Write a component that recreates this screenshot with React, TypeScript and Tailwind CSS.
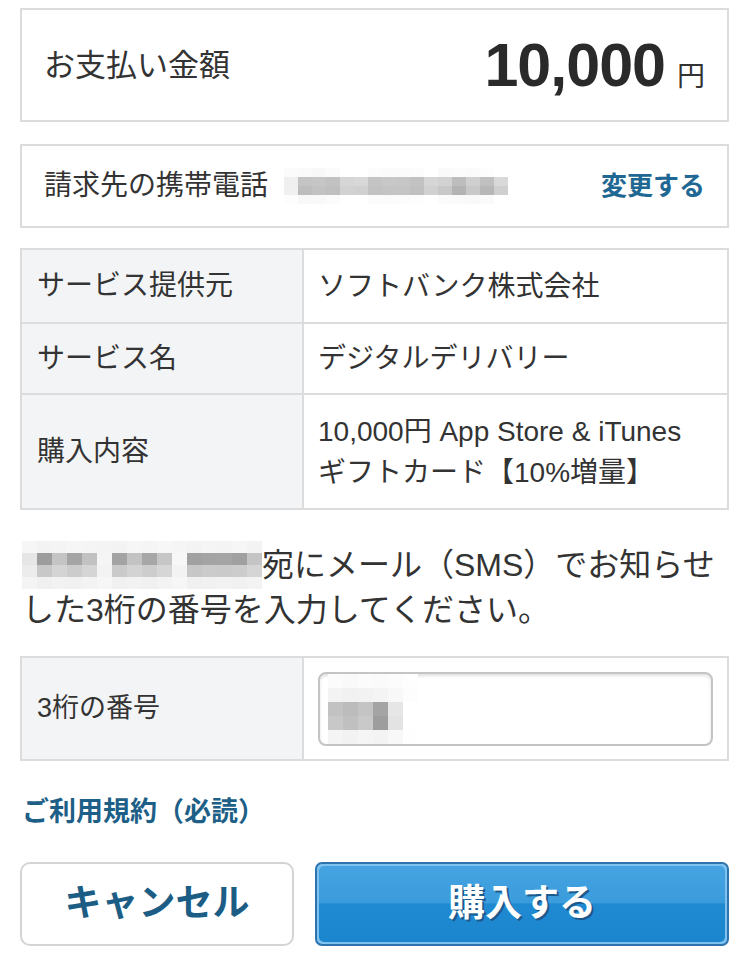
import React from "react";

const font = "font-['Liberation_Sans','Noto_Sans_CJK_JP',sans-serif]";

// pixelated placeholder for the masked phone numbers
const Mosaic: React.FC<{ cells: string[][]; w: number; h: number }> = ({
  cells,
  w,
  h,
}) => (
  <div className="flex flex-col">
    {cells.map((row, r) => (
      <div key={r} className="flex">
        {row.map((c, i) => (
          <div key={i} style={{ width: w, height: h, background: c }} />
        ))}
      </div>
    ))}
  </div>
);

const phoneCells = [
  ["#fbfbfb", "#fafafa", "#f8f8f8", "#fbfbfb", "#fff", "#fff", "#fcfcfc", "#fbfbfb", "#fbfbfb", "#fcfcfc", "#fff", "#fafafa", "#fcfcfc", "#fbfbfb", "#fdfdfd", "#fff"],
  ["#efefef", "#c4c4c4", "#c6c6c6", "#c2c2c2", "#d6d6d6", "#d8d8d8", "#c4c4c4", "#c8c8c8", "#c6c6c6", "#c2c2c2", "#d6d6d6", "#d2d2d2", "#bdbdbd", "#cfcfcf", "#c0c0c0", "#d9d9d9"],
  ["#f0f0f0", "#bdbdbd", "#c2c2c2", "#bfbfbf", "#d2d2d2", "#d0d0d0", "#c2c2c2", "#c4c4c4", "#c4c4c4", "#c0c0c0", "#d1d1d1", "#c8c8c8", "#b3b3b3", "#c8c8c8", "#b7b7b7", "#cfcfcf"],
  ["#fdfdfd", "#f8f8f8", "#f9f9f9", "#fbfbfb", "#fff", "#fff", "#fbfbfb", "#fbfbfb", "#fcfcfc", "#fdfdfd", "#fff", "#fbfbfb", "#fafafa", "#f9f9f9", "#fafafa", "#fff"],
];

const mailCells = [
  ["#f6f6f6", "#f3f3f3", "#f4f4f4", "#f6f6f6", "#f5f5f5", "#f4f4f4", "#f3f3f3", "#f6f6f6", "#f5f5f5", "#f7f7f7", "#f5f5f5", "#f3f3f3", "#f5f5f5", "#f4f4f4", "#f6f6f6", "#f3f3f3"],
  ["#e6e6e6", "#9d9d9d", "#c4c4c4", "#a5a5a5", "#c2c2c2", "#f5f5f5", "#a3a3a3", "#c3c3c3", "#a7a7a7", "#c6c6c6", "#f7f7f7", "#a1a1a1", "#a4a4a4", "#a5a5a5", "#a0a0a0", "#c4c4c4"],
  ["#ececec", "#c8c8c8", "#d4d4d4", "#cccccc", "#d5d5d5", "#f3f3f3", "#cacaca", "#d3d3d3", "#cdcdcd", "#d6d6d6", "#f3f3f3", "#c7c7c7", "#cbcbcb", "#cacaca", "#cccccc", "#d5d5d5"],
  ["#f4f4f4", "#f0f0f0", "#f2f2f2", "#f1f1f1", "#f3f3f3", "#f6f6f6", "#f1f1f1", "#f2f2f2", "#f0f0f0", "#f3f3f3", "#f6f6f6", "#f0f0f0", "#f1f1f1", "#f2f2f2", "#f1f1f1", "#f3f3f3"],
];

const codeCells = [
  ["#fbfbfb", "#f9f9f9", "#fbfbfb", "#fafafa", "#fcfcfc", "#fefefe"],
  ["#f3f3f3", "#f1f1f1", "#f2f2f2", "#f4f4f4", "#f8f8f8", "#fdfdfd"],
  ["#c2c2c2", "#bcbcbc", "#c4c4c4", "#a4a4a4", "#e6e6e6", "#ffffff"],
  ["#c8c8c8", "#c0c0c0", "#c9c9c9", "#9d9d9d", "#e3e3e3", "#ffffff"],
  ["#f4f4f4", "#f2f2f2", "#f5f5f5", "#f3f3f3", "#f8f8f8", "#fefefe"],
];

const rows: { label: string; value: React.ReactNode; h: string }[] = [
  { label: "サービス提供元", value: "ソフトバンク株式会社", h: "h-[72px]" },
  { label: "サービス名", value: "デジタルデリバリー", h: "h-[71px]" },
  {
    label: "購入内容",
    value: (
      <>
        10,000円 App Store &amp; iTunes
        <br />
        ギフトカード【10%増量】
      </>
    ),
    h: "h-[115px]",
  },
];

const App: React.FC = () => {
  return (
    <div className={`${font} w-[750px] h-[965px] bg-white text-[#333] pl-[20px] pr-[21px] pt-[8px]`}>
      {/* amount */}
      <div className="h-[114px] border-2 border-[#dcdcdc] flex items-center justify-between pl-[22px] pr-[22px]">
        <div className="text-[31px] leading-none">お支払い金額</div>
        <div className="flex items-baseline gap-[12px]">
          <span className="text-[61px] font-bold leading-none tracking-[-1px] text-[#2a2a2a]">
            10,000
          </span>
          <span className="text-[28px] leading-none">円</span>
        </div>
      </div>

      {/* billing phone */}
      <div className="mt-[22px] h-[84px] border-2 border-[#dcdcdc] flex items-center pl-[22px] pr-[22px]">
        <div className="text-[28px] leading-none">請求先の携帯電話</div>
        <div className="ml-[16px]">
          <Mosaic cells={phoneCells} w={14} h={9} />
        </div>
        <div className="ml-auto text-[26px] font-bold text-[#1f6894] leading-none">
          変更する
        </div>
      </div>

      {/* details table */}
      <div className="mt-[20px] border-2 border-[#dcdcdc] flex flex-col">
        {rows.map((r, i) => (
          <div
            key={i}
            className={`${r.h} flex ${i > 0 ? "border-t-2 border-[#dcdcdc]" : ""}`}
          >
            <div className="w-[282px] bg-[#f3f4f6] border-r-2 border-[#dcdcdc] flex items-center pl-[15px] text-[28px]">
              {r.label}
            </div>
            <div className="flex-1 flex items-center pl-[14px] text-[28px] leading-[41px]">
              {r.value}
            </div>
          </div>
        ))}
      </div>

      {/* notice */}
      <div className="mt-[31px] text-[32px] leading-[43px] pl-[2px]">
        <div className="flex items-center">
          <Mosaic cells={mailCells} w={15} h={12} />
          <span>宛にメール（SMS）でお知らせ</span>
        </div>
        <div>した3桁の番号を入力してください。</div>
      </div>

      {/* code input */}
      <div className="mt-[24px] h-[105px] border-2 border-[#dcdcdc] flex">
        <div className="w-[282px] bg-[#f3f4f6] border-r-2 border-[#dcdcdc] flex items-center pl-[15px] text-[27px]">
          3桁の番号
        </div>
        <div className="flex-1 flex items-center pl-[14px] pr-[14px]">
          <div className="w-full h-[74px] rounded-[8px] border-2 border-[#c4c4c4] shadow-[inset_0_2px_3px_rgba(0,0,0,0.12)] bg-white flex items-center pl-[8px]">
            <Mosaic cells={codeCells} w={15} h={14} />
          </div>
        </div>
      </div>

      {/* terms link */}
      <div className="mt-[38px] text-[27px] font-bold text-[#1d5f87] leading-none pl-[2px]">
        ご利用規約（必読）
      </div>

      {/* actions */}
      <div className="mt-[36px] flex gap-[21px]">
        <button className="w-[274px] h-[84px] rounded-[10px] border-2 border-[#d4d4d4] bg-white text-[37px] font-bold text-[#1c5d86]">
          キャンセル
        </button>
        <button className="flex-1 h-[84px] rounded-[7px] border-2 border-[#2d74ae] p-[2px] bg-[#7fc2ef]">
          <div className="w-full h-full rounded-[5px] bg-[linear-gradient(#45a3e1_0%,#3b9cdc_48%,#1f8ad1_50%,#1b86ce_100%)] flex items-center justify-center text-[37px] font-bold text-white [text-shadow:2px_2px_0_#1d5a8c]">
            購入する
          </div>
        </button>
      </div>
    </div>
  );
};

export default App;
